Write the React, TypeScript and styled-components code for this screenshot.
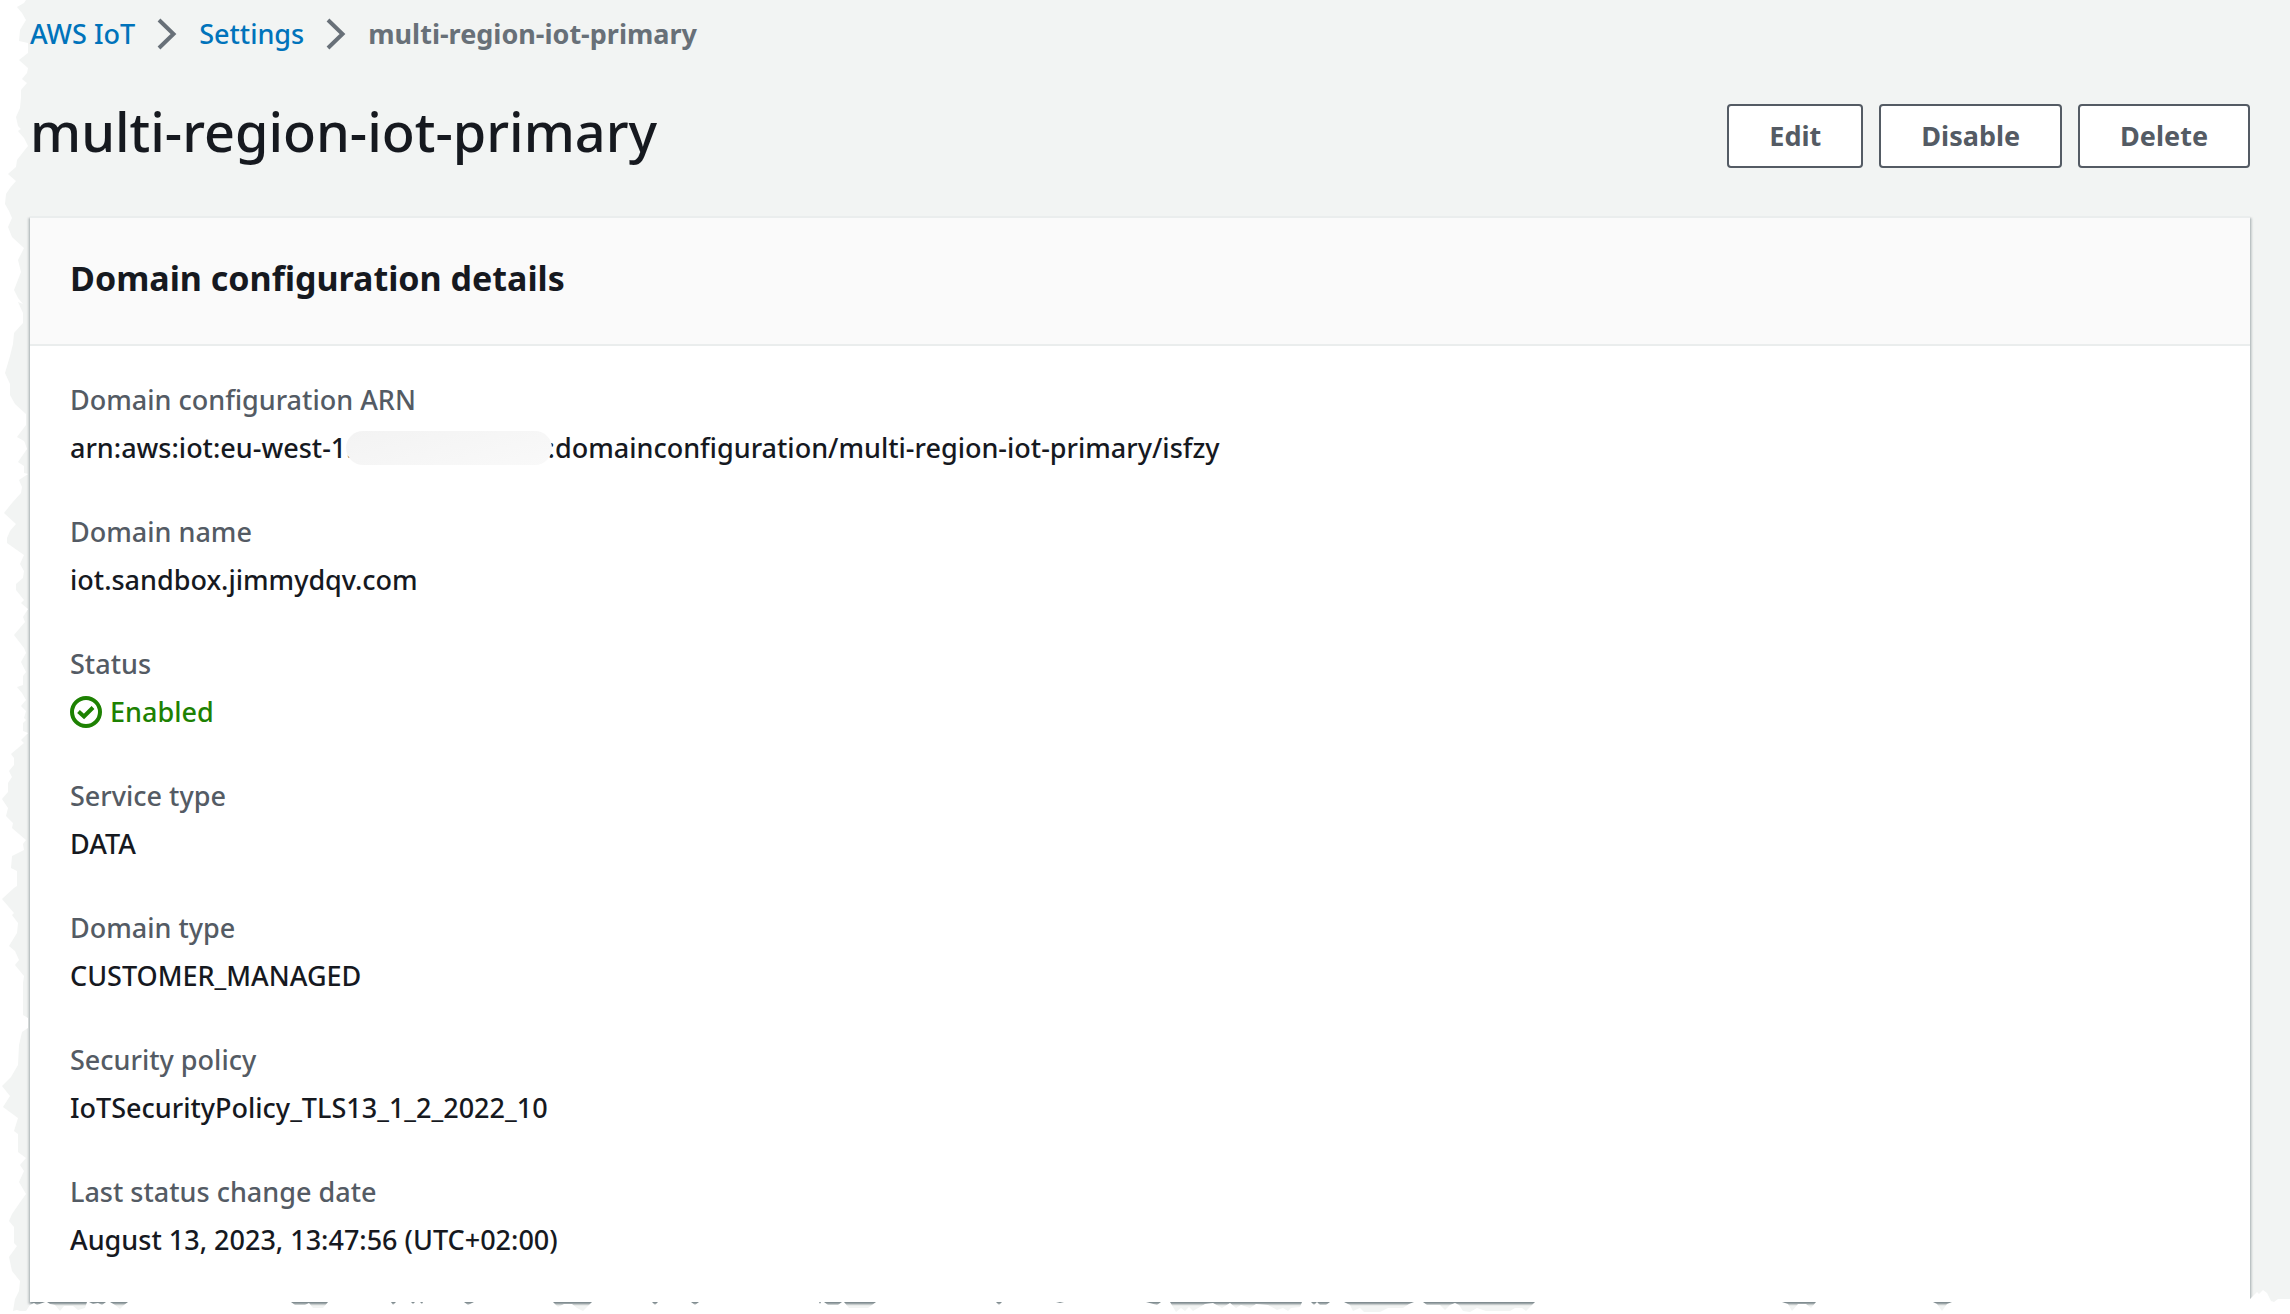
import React from "react";
import styled, { createGlobalStyle } from "styled-components";

const GlobalStyle = createGlobalStyle`
  *, *::before, *::after { box-sizing: border-box; }
  body {
    margin: 0;
    background: #f2f4f3;
    color: #16191f;
    font-family: "Noto Sans", "Open Sans", sans-serif;
    font-size: 27px;
    font-weight: 500;
    line-height: 44px;
  }
`;

const Page = styled.div`
  position: relative;
  min-height: 100vh;
  padding: 12px 40px 12px 30px;
  overflow: hidden;
`;

const Trail = styled.ol`
  display: flex;
  align-items: center;
  gap: 22px;
  margin: 0 0 44px;
  padding: 0;
  list-style: none;
`;

const Crumb = styled.li`
  display: flex;
  align-items: center;
  gap: 22px;
`;

const CrumbLink = styled.a`
  color: #0073bb;
  text-decoration: none;
  &:hover { text-decoration: underline; }
`;

const CurrentCrumb = styled.span`
  color: #687078;
  font-weight: 700;
`;

const TitleRow = styled.header`
  display: flex;
  justify-content: space-between;
  align-items: flex-start;
  margin-bottom: 48px;
`;

const Title = styled.h1`
  margin: 0;
  font-size: 54px;
  line-height: 62px;
  font-weight: 500;
`;

const Actions = styled.div`
  display: flex;
  gap: 16px;
  padding-top: 4px;
`;

const ActionButton = styled.button`
  height: 64px;
  padding: 0 40px;
  border: 2px solid #545b64;
  border-radius: 4px;
  background: #fff;
  color: #545b64;
  font: inherit;
  font-weight: 700;
  cursor: pointer;
`;

const Panel = styled.section`
  border-top: 2px solid #eaeded;
  background: #fff;
  box-shadow:
    0 2px 2px 0 rgba(0, 28, 36, 0.3),
    2px 2px 2px 0 rgba(0, 28, 36, 0.15),
    -2px 2px 2px 0 rgba(0, 28, 36, 0.15);
`;

const PanelHeader = styled.div`
  padding: 38px 40px 44px;
  border-bottom: 2px solid #eaeded;
  background: #fafafa;
`;

const PanelTitle = styled.h2`
  margin: 0;
  font-size: 34px;
  line-height: 44px;
  font-weight: 700;
`;

const Fields = styled.dl`
  display: grid;
  gap: 40px;
  margin: 0;
  padding: 32px 40px 40px;
`;

const Field = styled.div`
  display: grid;
  gap: 4px;
`;

const Label = styled.dt`
  color: #545b64;
`;

const Value = styled.dd`
  display: flex;
  align-items: center;
  margin: 0;
`;

const Redaction = styled.span`
  position: relative;
  width: 206px;
  height: 34px;
  margin: 0 -4px 0 -8px;
  border-radius: 17px;
  background: linear-gradient(165deg, #f3f3f3, #f9f9f9);
`;

const Status = styled.span`
  display: flex;
  align-items: center;
  gap: 8px;
  color: #1d8102;
`;

const LeftTear = styled.svg`
  position: absolute;
  top: 0;
  left: 0;
  width: 32px;
  height: 100%;
`;

const BottomTear = styled.svg`
  position: absolute;
  left: 0;
  bottom: 0;
  width: 100%;
  height: 24px;
`;

const Chevron = () => (
  <svg width="20" height="32" viewBox="0 0 20 32" fill="none" aria-hidden="true">
    <path d="M2 2 L16.500 16 L2 30" stroke="#687078" strokeWidth="4" />
  </svg>
);

const CheckIcon = () => (
  <svg width="32" height="32" viewBox="0 0 32 32" fill="none" stroke="currentColor" strokeWidth="4" aria-hidden="true">
    <circle cx="16" cy="16" r="14" />
    <path d="M8.500 15.500 L14 20.500 L23 11.500" />
  </svg>
);

const leftEdge =
  "26,0 24,3 17,7 22,13 26,20 20,30 19,41 28,43 28,53 19,60 28,68 27,73 22,79 27,83 21,90 21,97 20,108 16,117 18,126 21,129 18,131 24,138 28,146 24,151 17,160 16,167 8,174 16,181 10,188 6,194 5,204 9,211 12,218 8,227 12,237 24,248 18,260 21,272 14,290 18,298 23,304 18,302 23,313 23,323 14,333 13,344 10,356 5,373 10,384 10,395 15,404 26,414 26,425 17,437 24,441 25,443 27,449 18,462 24,466 24,473 28,474 19,480 22,487 21,493 12,503 4,513 16,524 10,531 7,538 7,543 24,555 20,564 24,571 23,578 16,584 16,590 24,600 21,603 28,609 23,617 25,622 14,635 24,648 26,653 21,662 26,672 23,676 23,685 17,687 22,693 26,700 21,706 26,711 24,718 26,720 23,723 23,731 28,733 21,740 24,743 11,754 14,758 14,765 9,771 12,777 8,783 8,792 2,799 8,808 6,816 13,823 12,828 26,840 23,844 24,850 12,856 11,868 17,871 17,886 14,888 2,899 14,913 12,915 18,923 17,933 9,946 15,951 19,960 15,965 24,976 23,983 23,1015 28,1018 28,1028 22,1032 19,1045 18,1065 11,1077 2,1086 10,1096 3,1107 18,1118 14,1131 18,1134 18,1152 26,1158 20,1165 24,1171 19,1182 26,1194 21,1201 12,1214 9,1221 14,1227 14,1243 17,1246 9,1257 12,1271 20,1281 19,1291 15,1299 13,1311 13,1314";

const bottomEdge =
  "13,24 13,21 17,20 20,21 26,21 30,15 34,13 37,15 45,12 47,12 50,14 55,15 60,21 64,16 73,16 78,20 85,18 87,12 89,12 93,14 98,13 102,15 106,12 110,12 115,15 120,19 124,15 128,12 291,12 295,15 305,15 309,13 313,18 323,18 328,12 391,12 393,15 396,12 411,12 413,14 415,12 420,12 422,14 423,12 464,12 468,15 474,12 553,12 558,17 564,14 572,14 577,18 583,21 588,16 592,12 652,12 655,15 658,12 691,12 695,15 699,12 819,12 820,14 821,12 824,12 828,15 838,15 842,12 844,12 849,18 868,18 876,12 996,12 999,15 1002,12 1056,12 1060,13 1064,12 1146,12 1157,15 1161,12 1170,12 1176,22 1181,18 1185,21 1189,17 1193,21 1205,14 1213,13 1222,18 1230,13 1236,18 1241,15 1250,18 1256,14 1268,15 1277,20 1283,18 1288,21 1291,18 1300,17 1302,12 1311,12 1314,15 1317,12 1320,15 1326,15 1330,12 1344,12 1350,15 1353,21 1360,18 1364,22 1380,22 1388,18 1403,18 1409,14 1414,12 1423,12 1427,15 1440,15 1445,20 1450,15 1455,13 1459,15 1463,21 1470,22 1477,18 1486,21 1510,21 1515,18 1522,18 1526,21 1533,14 1535,12 1782,12 1788,14 1792,21 1798,14 1806,14 1811,18 1816,12 1933,12 1937,14 1942,21 1947,14 1952,12 2250,12 2250,9 2257,2 2259,4 2263,0 2267,3 2271,11 2274,12 2278,9 2290,9 2290,24";

const fields: { label: string; value: React.ReactNode }[] = [
  {
    label: "Domain configuration ARN",
    value: (
      <>
        arn:aws:iot:eu-west-1:
        <Redaction />
        :domainconfiguration/multi-region-iot-primary/isfzy
      </>
    ),
  },
  { label: "Domain name", value: "iot.sandbox.jimmydqv.com" },
  {
    label: "Status",
    value: (
      <Status>
        <CheckIcon />
        Enabled
      </Status>
    ),
  },
  { label: "Service type", value: "DATA" },
  { label: "Domain type", value: "CUSTOMER_MANAGED" },
  { label: "Security policy", value: "IoTSecurityPolicy_TLS13_1_2_2022_10" },
  { label: "Last status change date", value: "August 13, 2023, 13:47:56 (UTC+02:00)" },
];

export default function App() {
  return (
    <Page>
      <GlobalStyle />
      <nav aria-label="Breadcrumbs">
        <Trail>
          <Crumb>
            <CrumbLink href="#iot">AWS IoT</CrumbLink>
            <Chevron />
          </Crumb>
          <Crumb>
            <CrumbLink href="#settings">Settings</CrumbLink>
            <Chevron />
          </Crumb>
          <Crumb>
            <CurrentCrumb aria-current="page">multi-region-iot-primary</CurrentCrumb>
          </Crumb>
        </Trail>
      </nav>
      <main>
        <TitleRow>
          <Title>multi-region-iot-primary</Title>
          <Actions>
            <ActionButton type="button">Edit</ActionButton>
            <ActionButton type="button">Disable</ActionButton>
            <ActionButton type="button">Delete</ActionButton>
          </Actions>
        </TitleRow>
        <Panel>
          <PanelHeader>
            <PanelTitle>Domain configuration details</PanelTitle>
          </PanelHeader>
          <Fields>
            {fields.map(({ label, value }) => (
              <Field key={label}>
                <Label>{label}</Label>
                <Value>{value}</Value>
              </Field>
            ))}
          </Fields>
        </Panel>
      </main>
      <LeftTear viewBox="0 0 32 1314" preserveAspectRatio="none" aria-hidden="true">
        <polygon points={`0,0 ${leftEdge} 0,1314`} fill="#fff" />
      </LeftTear>
      <BottomTear viewBox="0 0 2290 24" preserveAspectRatio="none" aria-hidden="true">
        <polygon points={bottomEdge} fill="#fff" />
      </BottomTear>
    </Page>
  );
}
